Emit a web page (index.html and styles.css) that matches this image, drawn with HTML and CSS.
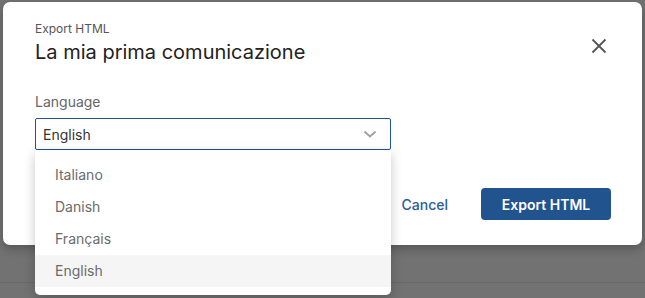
FILE: index.html
```html
<!DOCTYPE html>
<html lang="en">

<head>
    <meta charset="UTF-8">
    <meta name="viewport" content="width=device-width, initial-scale=1.0">
    <title>Export HTML</title>
    <link rel="stylesheet" href="styles.css">
</head>

<body>
    <div class="backdrop">
        <div class="backdrop-line"></div>
    </div>

    <div class="page">
        <div class="dialog">
            <div class="dialog-head">
                <div class="titles">
                    <p class="eyebrow">Export HTML</p>
                    <h1 class="title">La mia prima comunicazione</h1>
                </div>
                <button class="close" aria-label="Close">
                    <svg width="24" height="24" viewBox="0 0 24 24">
                        <path d="M5.5 5.5 L18.5 18.5 M18.5 5.5 L5.5 18.5" stroke="#555" stroke-width="1.8" fill="none" />
                    </svg>
                </button>
            </div>

            <label class="field-label">Language</label>
            <div class="select-wrap">
                <div class="select">
                    <span>English</span>
                    <svg class="chevron" width="14" height="8" viewBox="0 0 14 8">
                        <path d="M1.5 1.5 L7 6.5 L12.5 1.5" stroke="#a0a0a0" stroke-width="1.8" fill="none" />
                    </svg>
                </div>
                <ul class="menu">
                    <li class="option">Italiano</li>
                    <li class="option">Danish</li>
                    <li class="option">Français</li>
                    <li class="option active">English</li>
                </ul>
            </div>

            <div class="dialog-foot">
                <button class="btn-text">Cancel</button>
                <button class="btn-primary">Export HTML</button>
            </div>
        </div>
    </div>
</body>

</html>
```

FILE: styles.css
```css
body {
    font-family: Inter, "Noto Sans", sans-serif;
    margin: 0;
    padding: 0;
    background-color: #727272;
    height: 298px;
    overflow: hidden;
    position: relative;
}

/* page behind the overlay */
.backdrop {
    position: absolute;
    inset: 0;
}

.backdrop-line {
    position: absolute;
    top: 282px;
    left: 0;
    right: 0;
    border-top: 1px solid #6a6a6a;
}

.page {
    position: relative;
    padding: 2px 3px 0;
}

.dialog {
    width: 639px;
    height: 243px;
    box-sizing: border-box;
    background-color: #ffffff;
    border-radius: 7px;
    padding: 19px 31px 0 32px;
    box-shadow: 0 4px 10px rgba(0, 0, 0, 0.25);
}

.dialog-head {
    display: flex;
    justify-content: space-between;
    align-items: flex-start;
}

.eyebrow {
    margin: 0;
    font-size: 12px;
    line-height: 16px;
    color: #555;
}

.title {
    margin: 1px 0 0;
    font-size: 20px;
    line-height: 28px;
    font-weight: 400;
    color: #222;
}

.close {
    width: 24px;
    height: 24px;
    padding: 0;
    margin-top: 13px;
    border: none;
    background: none;
    cursor: pointer;
    display: flex;
}

.field-label {
    display: block;
    margin-top: 26px;
    font-size: 14px;
    line-height: 20px;
    color: #666;
}

.select-wrap {
    position: relative;
    width: 356px;
    margin-top: 6px;
}

.select {
    height: 32px;
    box-sizing: border-box;
    border: 1px solid #1f5296;
    border-radius: 2px;
    padding: 0 13px 0 7px;
    display: flex;
    align-items: center;
    justify-content: space-between;
    font-size: 14px;
    color: #333;
}

.menu {
    position: absolute;
    top: 100%;
    left: 0;
    width: 100%;
    margin: 0;
    padding: 9px 0 8px;
    list-style: none;
    background-color: #ffffff;
    border-radius: 0 0 5px 5px;
    box-shadow: 0 4px 12px rgba(0, 0, 0, 0.22);
    z-index: 2;
}

.option {
    height: 32px;
    line-height: 32px;
    padding-left: 20px;
    font-size: 14px;
    color: #6b6b6b;
}

.option.active {
    background-color: #f5f5f5;
}

.dialog-foot {
    display: flex;
    justify-content: flex-end;
    align-items: center;
    margin-top: 38px;
}

.btn-text {
    height: 32px;
    padding: 0 17px;
    margin-right: 16px;
    border: none;
    background: none;
    font-family: inherit;
    font-size: 14px;
    font-weight: 500;
    color: #2b5c9c;
    cursor: pointer;
}

.btn-primary {
    width: 130px;
    height: 32px;
    border: none;
    border-radius: 4px;
    background-color: #21538f;
    color: #ffffff;
    font-family: inherit;
    font-size: 14px;
    font-weight: 600;
    cursor: pointer;
}
```
